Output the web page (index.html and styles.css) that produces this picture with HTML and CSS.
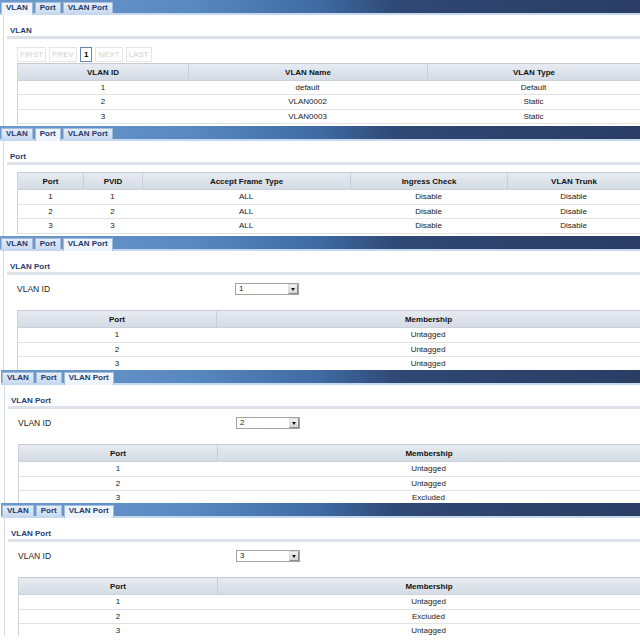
FILE: index.html
```html
<!DOCTYPE html>
<html lang="en">
<head>
    <meta charset="UTF-8">
    <title>VLAN Setting</title>
    <link rel="stylesheet" href="styles.css">
</head>
<body>
    <!-- VLAN tab -->
    <div class="panel panel-vlan">
        <div class="tabbar">
            <div class="tab active">VLAN</div>
            <div class="tab">Port</div>
            <div class="tab">VLAN Port</div>
        </div>
        <div class="panel-body">
            <div class="section-title">VLAN</div>
            <div class="divider"></div>
            <div class="pager">
                <span class="page-btn">FIRST</span>
                <span class="page-btn">PREV</span>
                <span class="page-btn current">1</span>
                <span class="page-btn">NEXT</span>
                <span class="page-btn">LAST</span>
            </div>
            <table class="grid grid-tight">
                <colgroup>
                    <col class="c-vid"><col class="c-vname"><col>
                </colgroup>
                <tr><th>VLAN ID</th><th>VLAN Name</th><th>VLAN Type</th></tr>
                <tr><td>1</td><td>default</td><td>Default</td></tr>
                <tr><td>2</td><td>VLAN0002</td><td>Static</td></tr>
                <tr><td>3</td><td>VLAN0003</td><td>Static</td></tr>
            </table>
        </div>
    </div>

    <!-- Port tab -->
    <div class="panel panel-port">
        <div class="tabbar">
            <div class="tab">VLAN</div>
            <div class="tab active">Port</div>
            <div class="tab">VLAN Port</div>
        </div>
        <div class="panel-body">
            <div class="section-title">Port</div>
            <div class="divider"></div>
            <table class="grid grid-port">
                <colgroup>
                    <col class="c-port"><col class="c-pvid"><col class="c-frame"><col class="c-ingress"><col>
                </colgroup>
                <tr><th>Port</th><th>PVID</th><th>Accept Frame Type</th><th>Ingress Check</th><th>VLAN Trunk</th></tr>
                <tr><td>1</td><td>1</td><td>ALL</td><td>Disable</td><td>Disable</td></tr>
                <tr><td>2</td><td>2</td><td>ALL</td><td>Disable</td><td>Disable</td></tr>
                <tr><td>3</td><td>3</td><td>ALL</td><td>Disable</td><td>Disable</td></tr>
            </table>
        </div>
    </div>

    <!-- VLAN Port tab, VLAN 1 -->
    <div class="panel panel-member">
        <div class="tabbar">
            <div class="tab">VLAN</div>
            <div class="tab">Port</div>
            <div class="tab active">VLAN Port</div>
        </div>
        <div class="panel-body">
            <div class="section-title">VLAN Port</div>
            <div class="divider"></div>
            <div class="field">
                <span class="field-label">VLAN ID</span>
                <div class="select"><span class="select-value">1</span><span class="select-arrow"></span></div>
            </div>
            <table class="grid">
                <colgroup><col class="c-mport"><col></colgroup>
                <tr><th>Port</th><th>Membership</th></tr>
                <tr><td>1</td><td>Untagged</td></tr>
                <tr><td>2</td><td>Untagged</td></tr>
                <tr><td>3</td><td>Untagged</td></tr>
            </table>
        </div>
    </div>

    <!-- VLAN Port tab, VLAN 2 -->
    <div class="panel panel-member shifted">
        <div class="tabbar">
            <div class="tab">VLAN</div>
            <div class="tab">Port</div>
            <div class="tab active">VLAN Port</div>
        </div>
        <div class="panel-body">
            <div class="section-title">VLAN Port</div>
            <div class="divider"></div>
            <div class="field">
                <span class="field-label">VLAN ID</span>
                <div class="select"><span class="select-value">2</span><span class="select-arrow"></span></div>
            </div>
            <table class="grid">
                <colgroup><col class="c-mport"><col></colgroup>
                <tr><th>Port</th><th>Membership</th></tr>
                <tr><td>1</td><td>Untagged</td></tr>
                <tr><td>2</td><td>Untagged</td></tr>
                <tr><td>3</td><td>Excluded</td></tr>
            </table>
        </div>
    </div>

    <!-- VLAN Port tab, VLAN 3 -->
    <div class="panel panel-member panel-last shifted">
        <div class="tabbar">
            <div class="tab">VLAN</div>
            <div class="tab">Port</div>
            <div class="tab active">VLAN Port</div>
        </div>
        <div class="panel-body">
            <div class="section-title">VLAN Port</div>
            <div class="divider"></div>
            <div class="field">
                <span class="field-label">VLAN ID</span>
                <div class="select"><span class="select-value">3</span><span class="select-arrow"></span></div>
            </div>
            <table class="grid">
                <colgroup><col class="c-mport"><col></colgroup>
                <tr><th>Port</th><th>Membership</th></tr>
                <tr><td>1</td><td>Untagged</td></tr>
                <tr><td>2</td><td>Excluded</td></tr>
                <tr><td>3</td><td>Untagged</td></tr>
            </table>
        </div>
    </div>
</body>
</html>
```

FILE: styles.css
```css
* {
    box-sizing: border-box;
}

body {
    margin: 0;
    background: #fff;
    color: #222;
    font-family: "Liberation Sans", Arial, sans-serif;
    font-size: 8px;
    overflow: hidden;
}

.panel {
    display: flex;
    flex-direction: column;
    height: 126px;
    overflow: hidden;
}

.panel-port {
    height: 110px;
}

.panel-member {
    height: 134px;
}

.panel-member.shifted {
    height: 133px;
    padding-left: 1px;
}

.panel-last {
    height: 140px;
}

/* tab strip */
.tabbar {
    flex: none;
    display: flex;
    align-items: flex-start;
    gap: 2px;
    height: 15px;
    padding: 2px 0 0 1px;
    background: linear-gradient(to right, #6d9bcf 0%, #5888c0 30%, #3f6aa3 50%, #2f4874 62%, #2b3d63 100%);
    border-bottom: 2px solid #c4d8ef;
}

.tab {
    height: 11px;
    padding: 0 4px;
    line-height: 10px;
    font-weight: bold;
    color: #1d3a6a;
    background: linear-gradient(#e3ecf7, #cbdbef);
    border: 1px solid #a5bcda;
    border-bottom: none;
}

.tab.active {
    height: 13px;
    background: #eef4fb;
}

.panel-body {
    flex: 1;
    margin-left: 3px;
    padding-top: 10px;
    border-left: 1px solid #d6dce5;
}

.section-title {
    padding-left: 6px;
    line-height: 11px;
    font-weight: bold;
    color: #1f3d70;
}

.divider {
    height: 3px;
    margin-left: 3px;
    background: #dde2ea;
}

/* paging */
.pager {
    display: flex;
    gap: 3px;
    margin: 8px 0 1px 13px;
}

.page-btn {
    height: 15px;
    padding: 0 2px;
    line-height: 13px;
    color: #d0d0d0;
    border: 1px solid #e6e6e6;
}

.page-btn.current {
    padding: 0 3px;
    color: #000;
    font-weight: bold;
    border-color: #6686ae;
}

/* VLAN ID select */
.field {
    display: flex;
    align-items: center;
    height: 12px;
    margin: 8px 0 15px 13px;
    color: #222;
}

.field-label {
    width: 218px;
    font-size: 8.5px;
}

.select {
    display: flex;
    width: 64px;
    height: 12px;
    border: 1px solid #a3a3a3;
    background: #fff;
}

.select-value {
    flex: 1;
    padding-left: 3px;
    line-height: 10px;
}

.select-arrow {
    position: relative;
    width: 10px;
    background: linear-gradient(#f2f2f2, #d6d6d6);
    border: 1px solid #8c8c8c;
    border-top-color: #dcdcdc;
    border-left-color: #dcdcdc;
}

.select-arrow::after {
    content: "";
    position: absolute;
    left: 2px;
    top: 3px;
    border-left: 2.5px solid transparent;
    border-right: 2.5px solid transparent;
    border-top: 3px solid #111;
}

/* tables */
.grid {
    width: calc(100% - 13px);
    margin-left: 13px;
    border-spacing: 0;
    table-layout: fixed;
    border-left: 1px solid #cfd3d9;
}

.grid-port {
    margin-top: 7px;
}

.grid th {
    height: 18px;
    padding: 0;
    font-weight: bold;
    color: #111;
    background: linear-gradient(#e7ebf1, #d5dbe5);
    border-top: 1px solid #c6cbd3;
    border-bottom: 1px solid #cdd2da;
    border-left: 1px solid #c9ced6;
}

.grid th:first-child {
    border-left: none;
}

.grid td {
    height: 14.5px;
    padding: 0;
    text-align: center;
    border-bottom: 1px solid #e3e3e3;
}

.grid-tight td {
    height: 14.3px;
}

.c-vid { width: 170px; }
.c-vname { width: 239px; }
.c-port { width: 65px; }
.c-pvid { width: 59px; }
.c-frame { width: 208px; }
.c-ingress { width: 157px; }
.c-mport { width: 198px; }
```
